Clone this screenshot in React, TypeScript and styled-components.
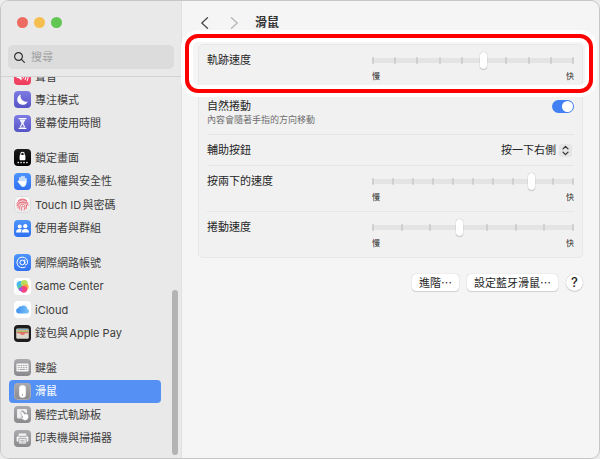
import React, { useState } from "react";
import styled, { createGlobalStyle, css } from "styled-components";

const GlobalStyle = createGlobalStyle`
  *, *::before, *::after { box-sizing: border-box; }
  body {
    margin: 0;
    background: #ececec;
    color: #262626;
    font-family: Inter, "Noto Sans CJK TC", sans-serif;
    font-size: 11px;
    line-height: 16px;
    text-autospace: normal;
  }
  button, input, select { font: inherit; color: inherit; }
`;

const Window = styled.div`
  display: flex;
  height: 100vh;
  border: 1px solid #c6c6c6;
  border-radius: 9px;
  overflow: hidden;
  background: #f5f5f5;
`;

/* ---------- Sidebar ---------- */

const Sidebar = styled.aside`
  position: relative;
  display: flex;
  flex-direction: column;
  flex: none;
  width: 181px;
  background: #e9e9e9;
  border-right: 1px solid #e0e0e0;
`;

const SidebarTop = styled.div`
  padding: 16px 7px 7px;
  border-bottom: 1px solid #d3d3d3;
`;

const TrafficLights = styled.div`
  display: flex;
  gap: 6px;
  padding-left: 9px;
`;

const Light = styled.button<{ $color: string }>`
  width: 11px;
  height: 11px;
  padding: 0;
  border: 0;
  border-radius: 50%;
  background: ${(p) => p.$color};
`;

const SearchBox = styled.label`
  display: flex;
  align-items: center;
  gap: 6px;
  height: 24px;
  margin-top: 17px;
  padding: 0 6px;
  border-radius: 5px;
  background: #dcdcdc;
`;

const SearchInput = styled.input`
  flex: 1;
  min-width: 0;
  padding: 0;
  border: 0;
  outline: 0;
  background: none;
  &::placeholder { color: #a0a0a0; opacity: 1; }
`;

const NavScroll = styled.nav`
  flex: 1;
  min-height: 0;
  overflow: hidden;
`;

const NavGroups = styled.div`
  display: flex;
  flex-direction: column;
  gap: 11px;
  margin: -12px 20px 0 8px;
`;

const NavGroup = styled.ul<{ $tall: boolean }>`
  display: grid;
  grid-auto-rows: 1fr;
  min-height: ${(p) => (p.$tall ? 94 : 70)}px;
  margin: 0;
  padding: 0;
  list-style: none;
`;

const NavLink = styled.a<{ $active: boolean }>`
  display: flex;
  align-items: center;
  gap: 4px;
  height: 100%;
  padding-left: 5px;
  border-radius: 4px;
  color: #3c3c3c;
  text-decoration: none;
  white-space: nowrap;
  ${(p) => p.$active && css`
    background: #5591f5;
    color: #fff;
  `}
`;

const ScrollThumb = styled.div`
  position: absolute;
  right: 3px;
  bottom: 3px;
  width: 6px;
  height: 36%;
  border-radius: 3px;
  background: #b3b3b3;
`;

const Tile = styled.svg`
  flex: none;
  width: 17px;
  height: 17px;
`;

/* ---------- Content ---------- */

const Content = styled.main`
  flex: 1;
  min-width: 0;
  padding: 0 16px;
`;

const TitleBar = styled.header`
  display: flex;
  align-items: center;
  height: 43px;
`;

const NavButton = styled.button<{ $dim?: boolean }>`
  display: flex;
  width: 30px;
  padding: 0 0 0 2px;
  border: 0;
  background: none;
  color: ${(p) => (p.$dim ? "#b4b4b4" : "#4c4c4c")};
`;

const Title = styled.h1`
  margin: 0 0 0 -3px;
  font-size: 12px;
  font-weight: 700;
  color: #333;
`;

const Card = styled.section`
  padding: 0 8px;
  border: 1px solid #e7e7e7;
  border-radius: 5px;
  background: #f1f1f1;
`;

const rowHeights = { tall: 46, medium: 44, short: 31 };

const Row = styled.div<{ $size: keyof typeof rowHeights }>`
  position: relative;
  display: flex;
  justify-content: space-between;
  align-items: ${(p) => (p.$size === "short" ? "center" : "flex-start")};
  min-height: ${(p) => rowHeights[p.$size]}px;
  padding-top: ${(p) => (p.$size === "short" ? 0 : 7)}px;
  &:first-child { min-height: 45px; }
  & + & { border-top: 1px solid #e6e6e6; }
`;

const Highlight = styled.div`
  position: absolute;
  z-index: 1;
  inset: -11px -19px -3px -22px;
  border: 4px solid #ff0000;
  border-radius: 13px;
  box-shadow: 0 0 0 4px #fff, inset 0 0 0 4px #fff;
  pointer-events: none;
`;

const RowLabel = styled.label`
  display: block;
`;

const Hint = styled.p`
  margin: 0;
  font-size: 9px;
  line-height: 12px;
  color: #6e6e6e;
`;

const SliderBlock = styled.div`
  width: 202px;
`;

const SliderArea = styled.div`
  display: grid;
  align-items: center;
  height: 17px;
  & > * { grid-area: 1 / 1; }
`;

const Track = styled.div`
  display: flex;
  align-items: center;
  justify-content: space-between;
  height: 5px;
  background: #e4e4e4;
`;

const Tick = styled.span`
  width: 2px;
  height: 7px;
  border-radius: 1px;
  background: #cfcfcf;
`;

const Range = styled.input`
  appearance: none;
  z-index: 0;
  width: 100%;
  height: 17px;
  margin: 0;
  background: none;
  outline: 0;
  &::-webkit-slider-thumb {
    appearance: none;
    width: 7px;
    height: 17px;
    border-radius: 4px;
    background: #fff;
    box-shadow: 0 0 1px rgba(0, 0, 0, 0.35), 0 1px 1px rgba(0, 0, 0, 0.15);
  }
`;

const Captions = styled.div`
  display: flex;
  justify-content: space-between;
  font-size: 8px;
  line-height: 14px;
`;

const Switch = styled.input`
  appearance: none;
  display: flex;
  align-items: center;
  width: 22px;
  height: 13px;
  margin: 2px 0 0;
  padding: 1px;
  border-radius: 7px;
  background: #c9c9c9;
  &::before {
    content: "";
    width: 11px;
    height: 11px;
    border-radius: 50%;
    background: #fff;
  }
  &:checked {
    justify-content: flex-end;
    background: #4181f3;
  }
`;

const PopUp = styled.div`
  position: relative;
  display: flex;
  align-items: center;
  margin-right: 2px;
`;

const PopUpSelect = styled.select`
  appearance: none;
  padding: 0 16px 0 0;
  border: 0;
  outline: 0;
  background: none;
`;

const PopUpBadge = styled.span`
  position: absolute;
  right: 0;
  display: flex;
  width: 13px;
  height: 13px;
  border-radius: 3px;
  background: #e5e5e5;
  pointer-events: none;
`;

const Actions = styled.footer`
  display: flex;
  justify-content: flex-end;
  gap: 8px;
  margin-top: 16px;
`;

const PushButton = styled.button<{ $round?: boolean }>`
  height: 17px;
  min-width: 17px;
  padding: 0 ${(p) => (p.$round ? 0 : 7)}px;
  border: 0;
  border-radius: ${(p) => (p.$round ? 9 : 4)}px;
  background: #fff;
  box-shadow: 0 0 1px rgba(0, 0, 0, 0.3), 0 1px 1px rgba(0, 0, 0, 0.12);
  font-family: ${(p) => (p.$round ? "Inter" : '"Noto Sans CJK TC"')}, sans-serif;
  font-size: ${(p) => (p.$round ? 13 : 11)}px;
  font-weight: ${(p) => (p.$round ? 500 : 400)};
  line-height: 17px;
  white-space: nowrap;
`;

/* ---------- Icons ---------- */

type TileName =
  | "sound" | "focus" | "screentime" | "lock" | "privacy" | "touchid" | "users"
  | "internet" | "gamecenter" | "icloud" | "wallet" | "keyboard" | "mouse"
  | "trackpad" | "printer";

const fills: Record<TileName, [string, string]> = {
  sound: ["#f9577a", "#ee3d5c"],
  focus: ["#7f7be4", "#5653c6"],
  screentime: ["#7f7be4", "#5653c6"],
  lock: ["#1c1c1c", "#000000"],
  privacy: ["#4d94fb", "#2f70f2"],
  touchid: ["#fafafa", "#ececec"],
  users: ["#4d94fb", "#2f70f2"],
  internet: ["#4d94fb", "#2f70f2"],
  gamecenter: ["#ffffff", "#ffffff"],
  icloud: ["#ffffff", "#ffffff"],
  wallet: ["#1d1d1d", "#1d1d1d"],
  keyboard: ["#a9a9ae", "#89898e"],
  mouse: ["#a9a9ae", "#89898e"],
  trackpad: ["#a9a9ae", "#89898e"],
  printer: ["#a9a9ae", "#89898e"],
};

const glyphs: Record<TileName, React.ReactNode> = {
  sound: (
    <g fill="none" stroke="#fff" strokeLinecap="round">
      <path d="M2.6 7v3h2l3 2.6V4.4L4.6 7Z" fill="#fff" stroke="none" />
      <path d="M9.2 6.8q1 1.7 0 3.4M11.2 5.4q2 3.1 0 6.2M13.2 4.2q2.6 4.3 0 8.6" />
    </g>
  ),
  focus: <path d="M6.8 3.4a5.4 5.4 0 1 0 6.9 7.1A5.6 5.6 0 0 1 6.8 3.4Z" fill="#fff" />,
  screentime: (
    <g fill="#fff">
      <path d="M4.6 3h7.8v1.3H4.6ZM4.6 12.8h7.8v1.3H4.6Z" />
      <path d="M5.8 4.6h5.4c0 2.2-1.6 2.6-1.6 3.9s1.6 1.8 1.6 4H5.8c0-2.2 1.6-2.7 1.6-4S5.8 6.8 5.8 4.6Z" opacity=".9" />
      <path d="m8.5 9.6 1.6 2.2H6.9Z" fill="#5e5bcc" />
    </g>
  ),
  lock: (
    <g fill="#fff">
      <path d="M6.8 6.5V4.9a1.7 1.7 0 0 1 3.4 0v1.6" fill="none" stroke="#fff" strokeWidth="1.1" />
      <rect x="5.6" y="6" width="5.8" height="5.2" rx=".8" />
      <circle cx="4.2" cy="13.6" r=".8" /><circle cx="7.1" cy="13.6" r=".8" />
      <circle cx="10" cy="13.6" r=".8" /><circle cx="12.9" cy="13.6" r=".8" />
    </g>
  ),
  privacy: (
    <g stroke="#fff" strokeLinecap="round" strokeWidth="1.4" fill="none">
      <path d="M6 9V4.8M8 8V3.4M10 8V3.8M11.9 9V5.6M6 10.4 4.3 8.3" />
      <path d="M5.9 8.4h6v1.8c0 2-1.1 3.2-2.8 3.2-1.5 0-2.5-1-3.2-2.6Z" fill="#fff" strokeWidth=".8" />
    </g>
  ),
  touchid: (
    <g fill="none" stroke="#e8596a" strokeWidth=".9" strokeLinecap="round">
      <path d="M4.3 4.7a5.8 5.8 0 0 1 8.4 0M3 7.3c3-4.7 8.1-4.6 11 0M2.9 9.7C3 4.9 13.8 4.4 14.1 9.2M4 12c.1-1.3.2-2.2.5-3.1C6 5.7 12.3 5.7 12.6 10c0 1-.2 1.8-.6 2.8M5.6 13.3c.1-2 .1-3 .6-3.9 1-1.8 4.4-1.5 4.7.7.2 1.3-.2 2.6-.8 4M7.4 14.2c.4-1.6.3-2.8.5-3.7.3-.9 1.4-.7 1.4.3" />
    </g>
  ),
  users: (
    <g fill="#fff">
      <circle cx="5.7" cy="6.6" r="2" /><circle cx="11.3" cy="6.2" r="2.1" />
      <path d="M2.1 12.4c0-2.2 1.5-3.3 3.6-3.3 1 0 1.7.2 2.3.7-.8.7-1.1 1.5-1.1 2.6Z" />
      <path d="M7.6 12.4c0-2.4 1.5-3.5 3.7-3.5s3.7 1.1 3.7 3.5Z" />
    </g>
  ),
  internet: (
    <g fill="none" stroke="#fff" strokeWidth="1" strokeLinecap="round">
      <circle cx="8.3" cy="8.5" r="2.4" />
      <path d="M10.8 6v3.5c0 1.9 2.8 1.7 2.8-1.2 0-3-2.3-5.2-5.2-5.2a5.4 5.4 0 1 0 2.8 10" />
    </g>
  ),
  gamecenter: (
    <g>
      <circle cx="6.3" cy="6.6" r="3.7" fill="#45b9f2" />
      <circle cx="10.3" cy="5.6" r="3.5" fill="#b5dc55" opacity=".95" />
      <circle cx="11.7" cy="9" r="3.1" fill="#fba33c" opacity=".9" />
      <circle cx="6" cy="9.3" r="2.5" fill="#52c8a4" />
      <circle cx="9.8" cy="11.3" r="3.4" fill="#f43d7c" opacity=".95" />
      <circle cx="6.6" cy="11.4" r="1.8" fill="#b24fe0" />
    </g>
  ),
  icloud: (
    <path
      d="M4.8 12.6a2.9 2.9 0 0 1-.5-5.700 2.100 2.100 0 0 1 2.700-1.400 3.800 3.800 0 0 1 6.400 2.600 2.300 2.300 0 0 1-.4 4.500Z"
      fill="url(#cloud)"
    />
  ),
  wallet: (
    <g>
      <rect x="2.2" y="3.4" width="12.6" height="10.4" rx="1.4" fill="#dcd8cd" />
      <path d="M2.8 4.200h11.400v1.200H2.800Z" fill="#63a5c8" />
      <path d="M2.800 5.400h11.400v1H2.800Z" fill="#efb643" />
      <path d="M2.800 6.400h11.400v.9H2.800Z" fill="#6db75b" />
      <path d="M2.800 7.300h11.400v1H2.800Z" fill="#e8594d" />
      <path d="M5.900 8.300c.700 2 4.500 2 5.200 0Z" fill="#e8594d" />
    </g>
  ),
  keyboard: (
    <g>
      <rect x="2.4" y="4.6" width="12.2" height="7.8" rx="1.2" fill="#f7f7f7" />
      <path d="M3.7 6.5h9.6M3.7 8.4h9.6" stroke="#95959a" strokeWidth="1" strokeDasharray="1 .7" />
      <path d="M3.7 10.4h1.2M5.7 10.4h5.6M12.1 10.4h1.2" stroke="#95959a" strokeWidth=".9" />
    </g>
  ),
  mouse: (
    <g>
      <rect x="5.2" y="2.2" width="6.6" height="12.6" rx="3" fill="#fff" />
      <circle cx="8.5" cy="12" r=".7" fill="#8e8e93" />
    </g>
  ),
  trackpad: (
    <g>
      <path d="M4.200 3h7.600q1.200 0 1.200 1.200v3l-2-.8-2-2-1.800.4-.2 1.600 1.600 2.600-.8 1.500.8 2H4.200Q3 12.500 3 11.300V4.200Q3 3 4.200 3Z" fill="#eee" />
      <path d="M7.200 5.600c.6-.6 1.300-.3 1.700.3l1.700 2.300c1.500-.9 3.400-.5 3.900 1.200.5 2-.3 3.800-1.900 4.700-1.500.6-2.500.2-3.800-.7l-1.800-1.300c-.5-.7.2-1.300 1-.9l.9.4-2-4.600c-.2-.6-.1-1 .3-1.400Z" fill="#fff" stroke="#929297" strokeWidth=".5" />
    </g>
  ),
  printer: (
    <g>
      <rect x="4.6" y="3.4" width="7.8" height="3" rx=".7" fill="#f3f3f3" />
      <rect x="2.6" y="6.2" width="11.8" height="5.6" rx="1.4" fill="#f3f3f3" />
      <rect x="4.8" y="8.3" width="7.4" height="5.6" rx=".7" fill="#f7f7f7" stroke="#8f8f94" strokeWidth=".8" />
      <path d="M6.3 10.3h4.4M6.3 12h4.4M4.6 6.3h7.8" stroke="#8f8f94" strokeWidth=".7" />
    </g>
  ),
};

function TileIcon({ name }: { name: TileName }) {
  const [from, to] = fills[name];
  const id = `tile-${name}`;
  return (
    <Tile viewBox="0 0 17 17" aria-hidden="true">
      <defs>
        <linearGradient id={id} x2="0" y2="1">
          <stop stopColor={from} />
          <stop offset="1" stopColor={to} />
        </linearGradient>
        {name === "icloud" && (
          <linearGradient id="cloud">
            <stop stopColor="#3d8fee" />
            <stop offset="1" stopColor="#7cc4f8" />
          </linearGradient>
        )}
      </defs>
      <rect width="17" height="17" rx="4" fill={`url(#${id})`} />
      {name === "touchid" && (
        <rect x=".5" y=".5" width="16" height="16" rx="3.5" fill="none" stroke="#dcdcdc" />
      )}
      {name === "mouse" && (
        <rect x=".5" y=".5" width="16" height="16" rx="3.5" fill="none" stroke="#a9a9ae" />
      )}
      {glyphs[name]}
    </Tile>
  );
}

/* ---------- Data ---------- */

const groups: { icon: TileName; label: string }[][] = [
  [
    { icon: "sound", label: "聲音" },
    { icon: "focus", label: "專注模式" },
    { icon: "screentime", label: "螢幕使用時間" },
  ],
  [
    { icon: "lock", label: "鎖定畫面" },
    { icon: "privacy", label: "隱私權與安全性" },
    { icon: "touchid", label: "Touch ID與密碼" },
    { icon: "users", label: "使用者與群組" },
  ],
  [
    { icon: "internet", label: "網際網路帳號" },
    { icon: "gamecenter", label: "Game Center" },
    { icon: "icloud", label: "iCloud" },
    { icon: "wallet", label: "錢包與Apple Pay" },
  ],
  [
    { icon: "keyboard", label: "鍵盤" },
    { icon: "mouse", label: "滑鼠" },
    { icon: "trackpad", label: "觸控式軌跡板" },
    { icon: "printer", label: "印表機與掃描器" },
  ],
];

interface SliderRowProps {
  id: string;
  label: string;
  steps: number;
  initial: number;
  highlighted?: boolean;
}

function SliderRow({ id, label, steps, initial, highlighted }: SliderRowProps) {
  const [value, setValue] = useState(initial);
  return (
    <Row $size="tall">
      <RowLabel htmlFor={id}>{label}</RowLabel>
      <SliderBlock>
        <SliderArea>
          <Track>
            {Array.from({ length: steps }, (_, i) => <Tick key={i} />)}
          </Track>
          <Range
            id={id}
            type="range"
            min={0}
            max={steps - 1}
            value={value}
            onChange={(e) => setValue(Number(e.target.value))}
          />
        </SliderArea>
        <Captions><span>慢</span><span>快</span></Captions>
      </SliderBlock>
      {highlighted && <Highlight />}
    </Row>
  );
}

export default function App() {
  return (
    <>
      <GlobalStyle />
      <Window>
        <Sidebar>
          <SidebarTop>
            <TrafficLights>
              <Light $color="#ed6b60" aria-label="關閉" />
              <Light $color="#f5bf4f" aria-label="縮到最小" />
              <Light $color="#62c655" aria-label="縮放" />
            </TrafficLights>
            <SearchBox>
              <svg width="11" height="11" viewBox="0 0 11 11" fill="none" stroke="#333" strokeWidth="1.2" strokeLinecap="round" aria-hidden="true">
                <circle cx="4.5" cy="4.5" r="3.9" />
                <path d="m7.4 7.4 3 3" />
              </svg>
              <SearchInput type="search" placeholder="搜尋" aria-label="搜尋" />
            </SearchBox>
          </SidebarTop>
          <NavScroll>
            <NavGroups>
              {groups.map((items) => (
                <NavGroup key={items[0].icon} $tall={items.length > 3}>
                  {items.map(({ icon, label }) => (
                    <li key={icon}>
                      <NavLink href={`#${icon}`} $active={icon === "mouse"}>
                        <TileIcon name={icon} />
                        <span>{label}</span>
                      </NavLink>
                    </li>
                  ))}
                </NavGroup>
              ))}
            </NavGroups>
          </NavScroll>
          <ScrollThumb />
        </Sidebar>

        <Content>
          <TitleBar>
            <NavButton aria-label="返回">
              <svg width="9" height="12" viewBox="0 0 9 12" fill="none" stroke="currentColor" strokeWidth="1.3" strokeLinecap="round" strokeLinejoin="round"><path d="M7.5.8 1.8 6l5.7 5.2" /></svg>
            </NavButton>
            <NavButton $dim aria-label="往前">
              <svg width="9" height="12" viewBox="0 0 9 12" fill="none" stroke="currentColor" strokeWidth="1.3" strokeLinecap="round" strokeLinejoin="round"><path d="M1.5.8 7.2 6l-5.7 5.2" /></svg>
            </NavButton>
            <Title>滑鼠</Title>
          </TitleBar>

          <Card>
            <SliderRow id="tracking" label="軌跡速度" steps={10} initial={5} highlighted />
            <Row $size="medium">
              <div>
                <RowLabel htmlFor="natural">自然捲動</RowLabel>
                <Hint>內容會隨著手指的方向移動</Hint>
              </div>
              <Switch id="natural" type="checkbox" role="switch" defaultChecked />
            </Row>
            <Row $size="short">
              <RowLabel htmlFor="secondary">輔助按鈕</RowLabel>
              <PopUp>
                <PopUpSelect id="secondary" defaultValue="right">
                  <option value="right">按一下右側</option>
                </PopUpSelect>
                <PopUpBadge>
                  <svg width="13" height="13" viewBox="0 0 13 13" fill="none" stroke="#333" strokeWidth="1.3" strokeLinecap="round" strokeLinejoin="round" aria-hidden="true">
                    <path d="M4 4.900 6.500 2.400 9 4.900M4 8.100l2.500 2.500L9 8.100" />
                  </svg>
                </PopUpBadge>
              </PopUp>
            </Row>
            <SliderRow id="double-click" label="按兩下的速度" steps={11} initial={8} />
            <SliderRow id="scrolling" label="捲動速度" steps={8} initial={3} />
          </Card>

          <Actions>
            <PushButton>進階…</PushButton>
            <PushButton>設定藍牙滑鼠…</PushButton>
            <PushButton $round aria-label="輔助說明">?</PushButton>
          </Actions>
        </Content>
      </Window>
    </>
  );
}
